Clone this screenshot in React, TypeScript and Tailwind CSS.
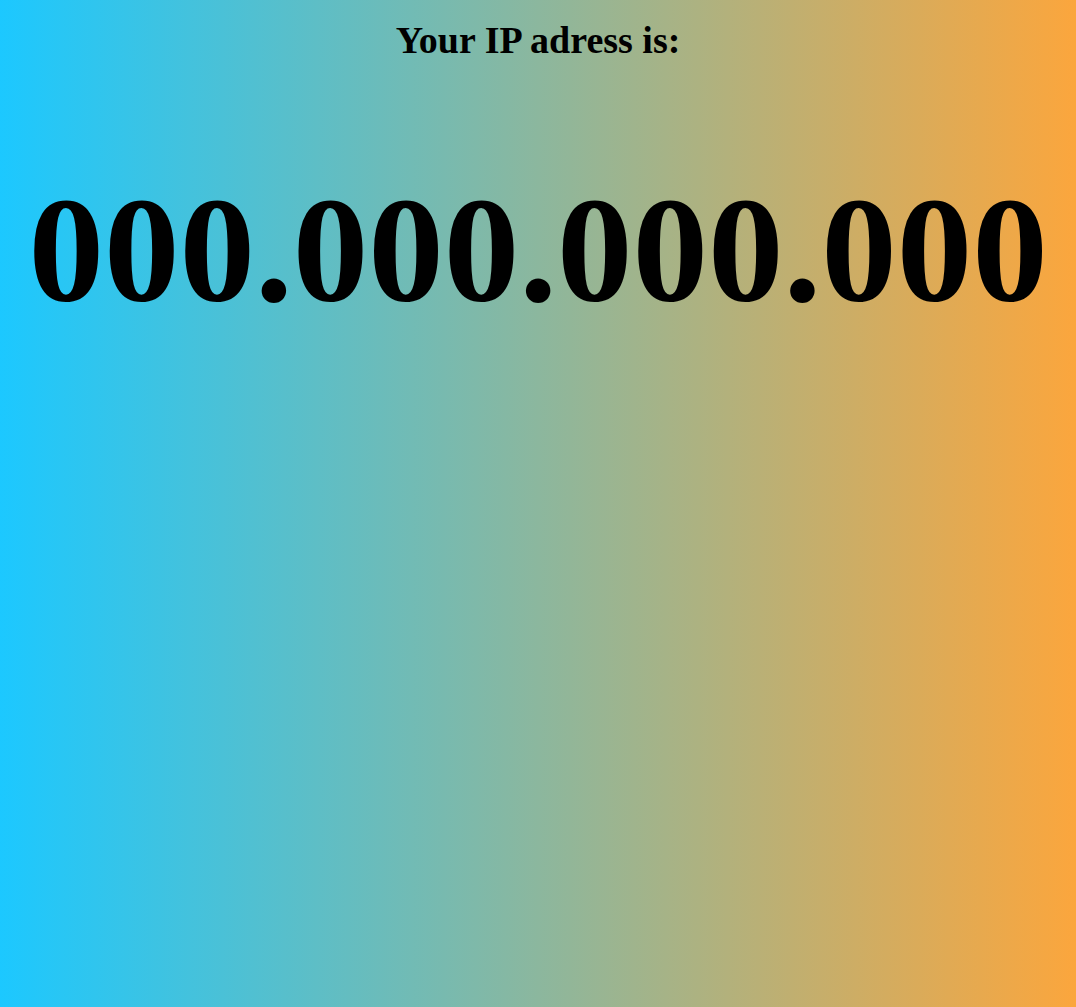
export default function App() {
  return (
    <div className="min-h-screen w-full bg-[linear-gradient(to_right,#1cc8ff,#fba63d)] font-['Times_New_Roman','Liberation_Serif',serif] text-black">
      <div className="flex flex-col items-center">
        {/* Heading */}
        <h1 className="mt-[12px] text-[38px] font-bold leading-normal">
          Your IP adress is:
        </h1>

        {/* Address */}
        <p className="mt-[68px] text-[151px] font-bold leading-normal whitespace-nowrap">
          000.000.000.000
        </p>
      </div>
    </div>
  );
}
